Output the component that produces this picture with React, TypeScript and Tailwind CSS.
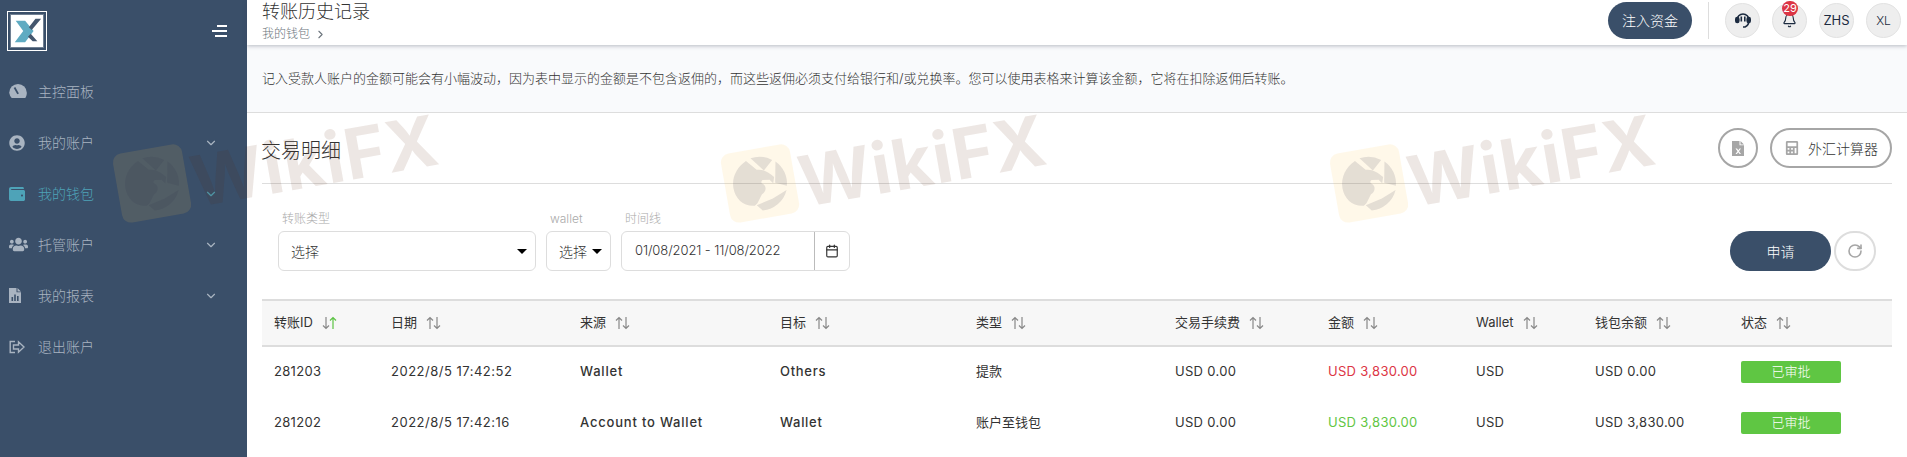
import { Bell, Calendar, ChevronDown, ChevronRight, RotateCw } from 'lucide-react';
import { FaCalculator, FaUserCircle, FaUsers, FaWallet } from 'react-icons/fa';

const menu = [
  { label: '主控面板', icon: 'gauge' },
  { label: '我的账户', icon: 'user', more: true },
  { label: '我的钱包', icon: 'wallet', more: true, active: true },
  { label: '托管账户', icon: 'users', more: true },
  { label: '我的报表', icon: 'report', more: true },
  { label: '退出账户', icon: 'logout' },
];

const columns = [
  { label: '转账ID', width: 'w-[117px]', sorted: true },
  { label: '日期', width: 'w-[189px]' },
  { label: '来源', width: 'w-[200px]' },
  { label: '目标', width: 'w-[196px]' },
  { label: '类型', width: 'w-[199px]' },
  { label: '交易手续费', width: 'w-[153px]' },
  { label: '金额', width: 'w-[148px]' },
  { label: 'Wallet', width: 'w-[119px]' },
  { label: '钱包余额', width: 'w-[146px]' },
  { label: '状态', width: 'w-[163px]' },
];

const rows = [
  { id: '281203', date: '2022/8/5 17:42:52', from: 'Wallet', to: 'Others', type: '提款', fee: 'USD 0.00', amount: 'USD 3,830.00', tone: 'text-[#dc3545]', wallet: 'USD', balance: 'USD 0.00' },
  { id: '281202', date: '2022/8/5 17:42:16', from: 'Account to Wallet', to: 'Wallet', type: '账户至钱包', fee: 'USD 0.00', amount: 'USD 3,830.00', tone: 'text-[#5fc643]', wallet: 'USD', balance: 'USD 3,830.00' },
];

function MenuIcon({ name }: { name: string }) {
  if (name === 'gauge') {
    return (
      <svg width="18" height="15" viewBox="0 0 18 15" fill="currentColor">
        <path d="M9 0a8.8 8.8 0 0 1 8.8 8.8c0 1.9-.5 3.6-1.5 5.2H2.7A9.6 9.6 0 0 1 .2 8.8 8.8 8.8 0 0 1 9 0z" />
        <path d="M5.5 3.5l3.6 6.4" stroke="#3a4f69" strokeWidth="1.8" />
      </svg>
    );
  }
  if (name === 'user') return <FaUserCircle size={16} />;
  if (name === 'wallet') return <FaWallet size={16} />;
  if (name === 'users') return <FaUsers size={19} />;
  if (name === 'report') {
    return (
      <svg width="12" height="15" viewBox="0 0 12 15" fill="currentColor">
        <path d="M0 0h7.5v4.2H12V15H0zM8.5 0L12 3.4H8.5z" />
        <path d="M2.5 9h1.6v4H2.5zM5.2 6.5h1.6V13H5.2zM8 8h1.6v5H8z" fill="#3a4f69" />
      </svg>
    );
  }
  return (
    <svg width="16" height="14" viewBox="0 0 16 14" fill="none" stroke="currentColor" strokeWidth="1.4">
      <path d="M6 1.5H1.2v11H6" />
      <path d="M4.5 5h5V1.8L15 7l-5.5 5.2V9h-5z" />
    </svg>
  );
}

function Logo() {
  return (
    <div className="ml-[7px] h-10 w-10 border border-white p-[2px]">
      <div className="h-full w-full border border-[#6f7f92] bg-white">
        <svg viewBox="0 0 34 34" className="h-full w-full">
          <path d="M5 6h10l9 11-9 12H4l9-12z" fill="#5fabc2" />
          <path d="M19 13l7-9h6l-10 12zM21 20l7 8h-5l-5-5z" fill="#44566d" />
        </svg>
      </div>
    </div>
  );
}

function SortArrows({ sorted }: { sorted?: boolean }) {
  return (
    <svg width="15" height="14" viewBox="0 0 15 14" fill="none" strokeWidth="1.2" className="ml-[9px] shrink-0">
      <path d="M4 13V1.5M1 4.5l3-3 3 3" stroke="#888888" transform={sorted ? 'rotate(180 4 7)' : undefined} />
      <path d="M11 1v11.5M8 9.5l3 3 3-3" stroke={sorted ? '#5cc344' : '#888888'} transform={sorted ? 'rotate(180 11 7)' : undefined} />
    </svg>
  );
}

function Watermark({ place }: { place: string }) {
  return (
    <div className={`pointer-events-none absolute top-[90px] z-20 flex h-[140px] w-[340px] -rotate-10 items-center ${place}`}>
      <div className="flex h-[70px] w-[70px] shrink-0 items-center justify-center rounded-[9px] bg-[rgba(255,200,70,0.12)]">
        <svg width="56" height="56" viewBox="0 0 56 56" fill="rgba(50,50,75,0.13)">
          <path d="M23 1.500a27 27 0 0 1 21 5.500l-10 9z" />
          <path d="M47 9a27 27 0 0 1 7 26L43 30z" />
          <path d="M53 39a27 27 0 0 1-27 16l-5-6 17-4z" />
          <path d="M18 3.500L27 14c6 0 11 4 16 10l-2 6-3-4-7-1c-2 1-2 3 0 4 3 3 2 8-3 10l-6 8-3 2C8 48 1 39 1 28 1 17 8 8 18 3.500z" />
        </svg>
      </div>
      <span className="mt-[12px] ml-[4px] text-[70px] leading-none font-bold tracking-[1px] whitespace-nowrap text-[rgba(90,40,10,0.11)]">
        WikiFX
      </span>
    </div>
  );
}

export default function App() {
  return (
    <div className="relative flex h-[457px] w-[1907px] overflow-hidden bg-white font-['Inter','Noto_Sans_CJK_SC',sans-serif] text-[13px] text-[#333333]">
      <aside className="w-[247px] shrink-0 bg-[#3a4f69] text-[#a9b4c1]">
        <div className="flex h-[66px] items-start pt-[11px]">
          <Logo />
          <div className="mt-[14px] ml-[165px] flex w-[15px] flex-col items-end gap-[3px]">
            <span className="h-[2px] w-[10px] bg-white" />
            <span className="h-[2px] w-[15px] bg-white" />
            <span className="h-[2px] w-[12px] bg-white" />
          </div>
        </div>
        <nav>
          {menu.map((item) => (
            <div key={item.label} className={`flex h-[51px] items-center text-[14px] ${item.active ? 'text-[#4ea3b8]' : ''}`}>
              <span className="flex w-[38px] justify-start pl-[9px]">
                <MenuIcon name={item.icon} />
              </span>
              <span className="font-light">{item.label}</span>
              {item.more && <ChevronDown size={14} className="ml-[110px]" />}
            </div>
          ))}
        </nav>
      </aside>

      <main className="min-w-0 flex-1">
        <header className="relative z-10 flex h-[45px] items-start justify-between bg-white pr-[6px] pl-[15px] shadow-[0_1px_4px_rgba(60,70,90,0.35)]">
          <div>
            <h1 className="mt-[1px] text-[18px] leading-[22px] font-light text-[#333333]">转账历史记录</h1>
            <div className="mt-[3px] flex items-center text-[12px] leading-4 font-light text-[#6c757d]">
              我的钱包
              <ChevronRight size={13} className="ml-[4px]" />
            </div>
          </div>
          <div className="flex items-start pt-[2px]">
            <button className="h-[37px] w-[84px] rounded-full bg-[#3a4f69] text-[14px] font-light text-white">注入资金</button>
            <span className="mx-4 h-[37px] w-px bg-[#dddddd]" />
            <div className="mt-px flex gap-3 text-[#1c2b40]">
              <span className="flex h-[35px] w-[35px] items-center justify-center rounded-full border border-[#e2e2e2] bg-[#eeeeee]">
                <svg width="16" height="17" viewBox="0 0 16 17" fill="none" stroke="currentColor" strokeWidth="1.6">
                  <path d="M2 8a6 6 0 0 1 12 0c0 3-1.500 6-4 7H8" />
                  <rect x="0.8" y="5.5" width="3" height="5" rx="1.4" fill="currentColor" />
                  <rect x="5.5" y="4.5" width="1.6" height="5" fill="currentColor" stroke="none" />
                  <rect x="9" y="4.5" width="1.6" height="5" fill="currentColor" stroke="none" />
                  <rect x="12.2" y="5.5" width="3" height="5" rx="1.4" fill="currentColor" />
                </svg>
              </span>
              <span className="relative flex h-[35px] w-[35px] items-center justify-center rounded-full border border-[#e2e2e2] bg-[#eeeeee]">
                <Bell size={15} strokeWidth={1.8} />
                <span className="absolute -top-[3px] left-[9px] flex h-[15px] w-[16px] items-center justify-center rounded-full bg-[#dc3545] text-[11px] leading-none text-white">
                  29
                </span>
              </span>
              <span className="flex h-[35px] w-[35px] items-center justify-center rounded-full border border-[#e2e2e2] bg-[#eeeeee] text-[13px]">ZHS</span>
              <span className="flex h-[35px] w-[35px] items-center justify-center rounded-full border border-[#e2e2e2] bg-[#eeeeee] text-[12px] font-light">XL</span>
            </div>
          </div>
        </header>

        <div className="flex h-[68px] items-center border-b border-[#dddddd] bg-[#f9fafc] pl-[15px] text-[13px] font-light">
          记入受款人账户的金额可能会有小幅波动，因为表中显示的金额是不包含返佣的，而这些返佣必须支付给银行和/或兑换率。您可以使用表格来计算该金额，它将在扣除返佣后转账。
        </div>

        <section className="px-[15px]">
          <div className="flex h-[71px] items-center justify-between border-b border-[#dddddd]">
            <h2 className="mt-[6px] -ml-px text-[20px] font-light text-[#333333]">交易明细</h2>
            <div className="flex gap-3 text-[#a6a6a6]">
              <button className="flex h-10 w-10 items-center justify-center rounded-full border-2 border-[#a6a6a6]">
                <svg width="12" height="15" viewBox="0 0 12 15" fill="currentColor">
                  <path d="M0 0h7.5v4.2H12V15H0zM8.5 0L12 3.4H8.5z" />
                  <path d="M3.5 7.5l2 2.8-2 2.7h1.4l1.4-1.800 1.300 1.800h1.400l-2-2.700 2-2.800H7.600L6.300 9.300 5 7.500z" fill="#ffffff" />
                </svg>
              </button>
              <button className="flex h-10 w-[122px] items-center rounded-full border-2 border-[#a6a6a6] pl-[13px]">
                <FaCalculator size={14} />
                <span className="ml-[9px] text-[14px] font-light text-[#333333]">外汇计算器</span>
              </button>
            </div>
          </div>

          <div className="flex items-end pt-[24px] pr-4 pl-4">
            <div>
              <label className="mb-px block pl-1 text-[12px] leading-[22px] font-light text-[#aaaaaa]">转账类型</label>
              <div className="flex h-10 w-[258px] items-center justify-between rounded-md border border-[#dddddd] pr-2 pl-3 text-[14px] font-light">
                选择
                <span className="h-0 w-0 border-x-[5px] border-t-[5px] border-x-transparent border-t-black" />
              </div>
            </div>
            <div className="ml-[10px]">
              <label className="mb-px block pl-1 text-[12px] leading-[22px] font-light text-[#aaaaaa]">wallet</label>
              <div className="flex h-10 w-[65px] items-center justify-between rounded-md border border-[#dddddd] pr-2 pl-3 text-[14px] font-light">
                选择
                <span className="h-0 w-0 border-x-[5px] border-t-[5px] border-x-transparent border-t-black" />
              </div>
            </div>
            <div className="ml-[10px]">
              <label className="mb-px block pl-1 text-[12px] leading-[22px] font-light text-[#aaaaaa]">时间线</label>
              <div className="flex h-10 w-[229px] items-center rounded-md border border-[#dddddd] text-[13px] font-light">
                <span className="w-[192px] pl-[13px] tracking-[-0.1px] whitespace-nowrap">01/08/2021 - 11/08/2022</span>
                <span className="flex h-full flex-1 items-center justify-center border-l border-[#bbbbbb]">
                  <Calendar size={14} />
                </span>
              </div>
            </div>
            <button className="ml-auto h-10 w-[101px] rounded-full bg-[#3a4f69] text-[14px] font-light text-white">申请</button>
            <button className="ml-[3px] flex h-10 w-[42px] items-center justify-center rounded-full border-2 border-[#dddddd] text-[#a6a6a6]">
              <RotateCw size={16} strokeWidth={2.4} />
            </button>
          </div>

          <table className="mt-[28px] w-[1630px] table-fixed border-collapse">
            <colgroup>
              {columns.map((col) => (
                <col key={col.label} className={col.width} />
              ))}
            </colgroup>
            <thead>
              <tr className="h-[46px] border-y-2 border-[#dddddd] bg-[#f7f7f7]">
                {columns.map((col) => (
                  <th key={col.label} className="pl-3 text-left text-[13px] font-normal">
                    <span className="flex items-center">
                      {col.label}
                      <SortArrows sorted={col.sorted} />
                    </span>
                  </th>
                ))}
              </tr>
            </thead>
            <tbody>
              {rows.map((row) => (
                <tr key={row.id} className="h-[51px]">
                  <td className="pl-3 tracking-[0.3px]">{row.id}</td>
                  <td className="pl-3 tracking-[0.5px]">{row.date}</td>
                  <td className="pl-3 font-medium tracking-[0.8px]">{row.from}</td>
                  <td className="pl-3 font-medium tracking-[0.7px]">{row.to}</td>
                  <td className="pl-3">{row.type}</td>
                  <td className="pl-3 tracking-[0.3px]">{row.fee}</td>
                  <td className={`pl-3 tracking-[0.3px] ${row.tone}`}>{row.amount}</td>
                  <td className="pl-3 tracking-[0.3px]">{row.wallet}</td>
                  <td className="pl-3 tracking-[0.3px]">{row.balance}</td>
                  <td className="pl-3">
                    <span className="flex h-[22px] w-[100px] items-center justify-center rounded-[2px] bg-[#5fc643] text-[13px] font-light text-white">已审批</span>
                  </td>
                </tr>
              ))}
            </tbody>
          </table>
        </section>
      </main>

      <Watermark place="left-[115px]" />
      <Watermark place="left-[723px]" />
      <Watermark place="left-[1332px]" />
    </div>
  );
}
